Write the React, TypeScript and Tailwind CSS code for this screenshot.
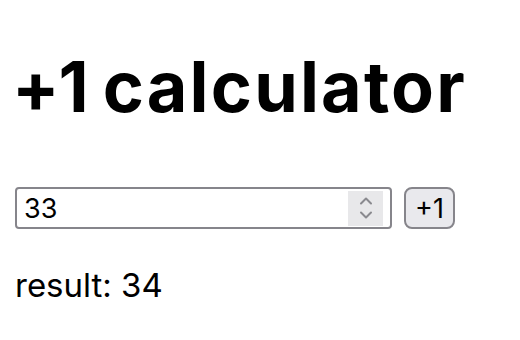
import React from "react";

export default function App() {
  return (
    <div className="min-h-[340px] bg-white px-[15px] text-black" style={{ fontFamily: 'Inter, "Noto Sans", sans-serif' }}>
      <h1 className="flex pt-[52px] text-[70px] font-bold leading-none">
        <span className="-ml-[3px] tracking-[-1px]">+1</span>
        <span className="ml-[15px] tracking-[2.2px]">calculator</span>
      </h1>
      <div className="mt-[65px] flex items-center gap-[12px]">
        <div className="flex h-[42px] w-[377px] items-center rounded-[4px] border-2 border-[#86858b] pl-[7px] pr-[7px]">
          <span className="flex-1 text-[27px] leading-none">33</span>
          <div className="flex h-[35px] w-[35px] items-center justify-center bg-[#e8e8ea]">
            <svg width="14" height="24" viewBox="0 0 14 24" fill="none" stroke="#8a8a8f" strokeWidth="2" strokeLinecap="round" strokeLinejoin="round">
              <path d="M2 7.5 L7 2.5 L12 7.5" />
              <path d="M2 16.5 L7 21.5 L12 16.5" />
            </svg>
          </div>
        </div>
        <button className="flex h-[42px] w-[51px] items-center justify-center rounded-[8px] border-2 border-[#86858b] bg-[#e9e9ed] text-[27px] leading-none">+1</button>
      </div>
      <p className="mt-[40px] text-[33px] leading-none">result: 34</p>
    </div>
  );
}
